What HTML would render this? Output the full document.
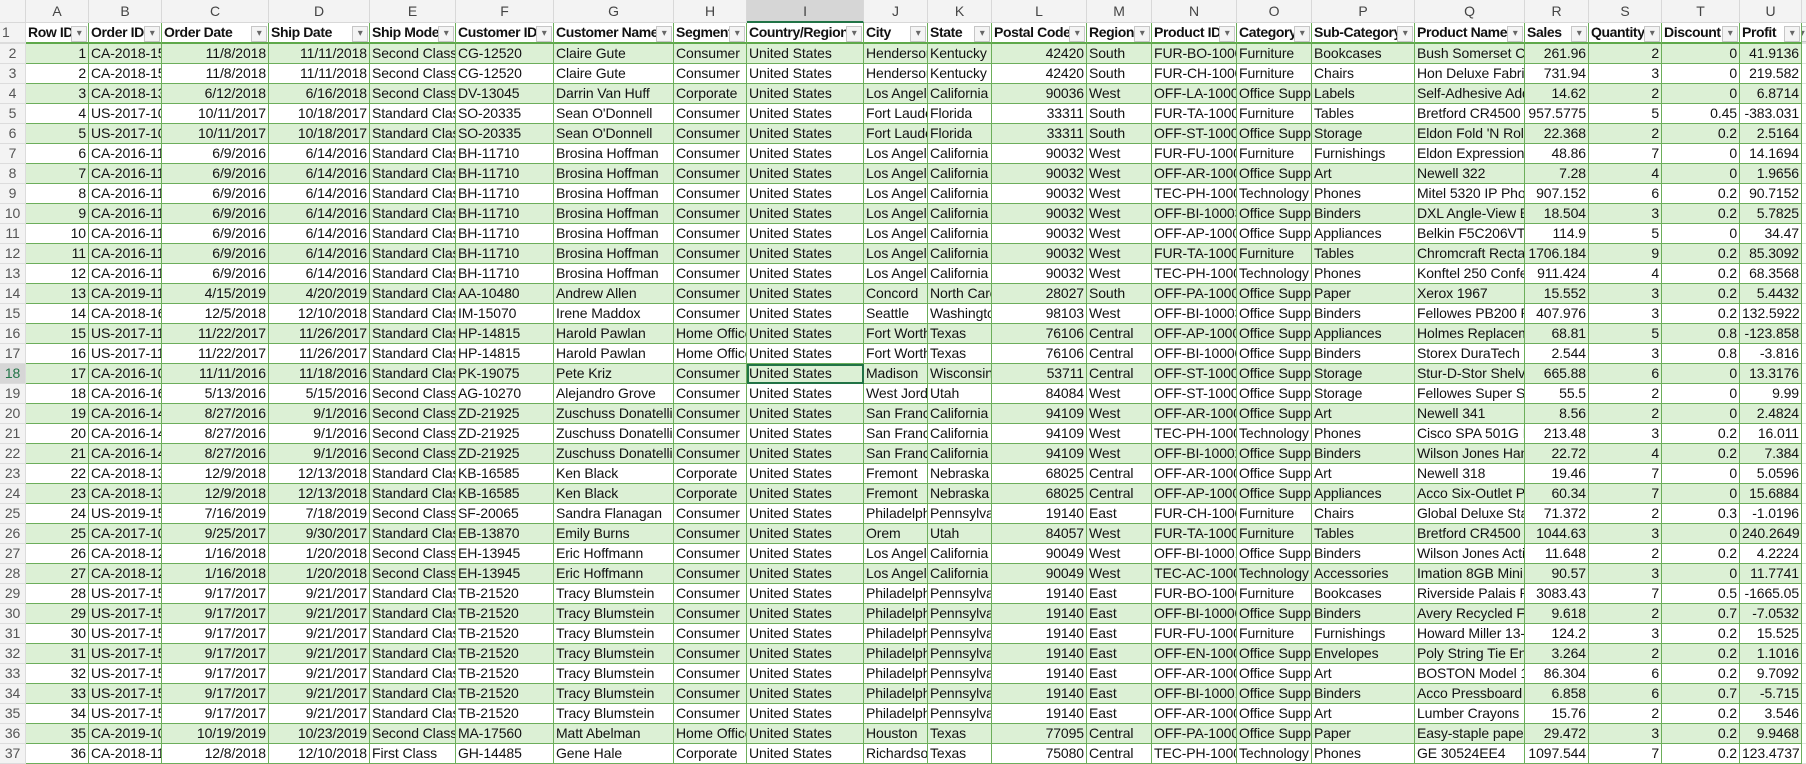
<!DOCTYPE html>
<html><head><meta charset="utf-8"><style>
body{margin:0;width:1806px;height:761px;overflow:hidden;background:#fff;font-family:"Liberation Sans Narrow","Liberation Sans",sans-serif;font-size:14px;letter-spacing:-0.1px;color:#111}
.r{display:flex;height:20px}
.r span{box-sizing:border-box;flex:none;height:20px;line-height:19px;padding:0 2px;overflow:hidden;white-space:nowrap;border-right:1px solid #6cae5a;border-bottom:1px solid #6cae5a;position:relative}
.r span:nth-child(1){width:26px;background:#f3f3f3;color:#555;text-align:center;border-color:#dcdcdc;font-size:14px}
.r span:nth-child(2){width:63px;text-align:right}
.r span:nth-child(3){width:73px}
.r span:nth-child(4){width:107px;text-align:right}
.r span:nth-child(5){width:101px;text-align:right}
.r span:nth-child(6){width:86px}
.r span:nth-child(7){width:98px}
.r span:nth-child(8){width:120px}
.r span:nth-child(9){width:73px}
.r span:nth-child(10){width:117px}
.r span:nth-child(11){width:64px}
.r span:nth-child(12){width:64px}
.r span:nth-child(13){width:95px;text-align:right}
.r span:nth-child(14){width:65px}
.r span:nth-child(15){width:85px}
.r span:nth-child(16){width:75px}
.r span:nth-child(17){width:103px}
.r span:nth-child(18){width:110px}
.r span:nth-child(19){width:64px;text-align:right}
.r span:nth-child(20){width:73px;text-align:right}
.r span:nth-child(21){width:78px;text-align:right}
.r span:nth-child(22){width:62px;text-align:right}
.r span:nth-child(23){width:10px;border-color:#e0e0e0;background:#fff}
.g span{background:#dcf0d5}
.h{height:23px}
.h span{height:23px;line-height:23px;background:#f3f3f3!important;color:#444;text-align:center!important;border-color:#d8d8d8!important;font-size:14px}
.h span.sel{background:#d6d6d6!important;border-bottom:2px solid #217346!important}
.t{height:21px}
.t span{height:21px;font-weight:bold;letter-spacing:-0.4px;text-align:left!important;border-bottom:2px solid #5ea84a}
.t span+span::after{content:"▾";position:absolute;right:1px;top:3px;width:14px;height:14px;line-height:13px;border:1px solid #c6c6c6;background:#f4f4f4;font-size:10px;color:#666;text-align:center;font-weight:normal}
.t span:nth-child(1){font-weight:normal}
.cur{outline:2px solid #217346;outline-offset:-2px}
</style></head><body>
<div class="r h"><span></span><span>A</span><span>B</span><span>C</span><span>D</span><span>E</span><span>F</span><span>G</span><span>H</span><span class="sel">I</span><span>J</span><span>K</span><span>L</span><span>M</span><span>N</span><span>O</span><span>P</span><span>Q</span><span>R</span><span>S</span><span>T</span><span>U</span><span></span></div>
<div class="r t"><span>1</span><span>Row ID</span><span>Order ID</span><span>Order Date</span><span>Ship Date</span><span>Ship Mode</span><span>Customer ID</span><span>Customer Name</span><span>Segment</span><span>Country/Region</span><span>City</span><span>State</span><span>Postal Code</span><span>Region</span><span>Product ID</span><span>Category</span><span>Sub-Category</span><span>Product Name</span><span>Sales</span><span>Quantity</span><span>Discount</span><span>Profit</span><span></span></div>
<div class="r g"><span>2</span><span>1</span><span>CA-2018-152156</span><span>11/8/2018</span><span>11/11/2018</span><span>Second Class</span><span>CG-12520</span><span>Claire Gute</span><span>Consumer</span><span>United States</span><span>Henderson</span><span>Kentucky</span><span>42420</span><span>South</span><span>FUR-BO-10001798</span><span>Furniture</span><span>Bookcases</span><span>Bush Somerset Collection</span><span>261.96</span><span>2</span><span>0</span><span>41.9136</span><span></span></div>
<div class="r"><span>3</span><span>2</span><span>CA-2018-152156</span><span>11/8/2018</span><span>11/11/2018</span><span>Second Class</span><span>CG-12520</span><span>Claire Gute</span><span>Consumer</span><span>United States</span><span>Henderson</span><span>Kentucky</span><span>42420</span><span>South</span><span>FUR-CH-10000454</span><span>Furniture</span><span>Chairs</span><span>Hon Deluxe Fabric Upholstered</span><span>731.94</span><span>3</span><span>0</span><span>219.582</span><span></span></div>
<div class="r g"><span>4</span><span>3</span><span>CA-2018-138688</span><span>6/12/2018</span><span>6/16/2018</span><span>Second Class</span><span>DV-13045</span><span>Darrin Van Huff</span><span>Corporate</span><span>United States</span><span>Los Angeles</span><span>California</span><span>90036</span><span>West</span><span>OFF-LA-10000240</span><span>Office Supplies</span><span>Labels</span><span>Self-Adhesive Address</span><span>14.62</span><span>2</span><span>0</span><span>6.8714</span><span></span></div>
<div class="r"><span>5</span><span>4</span><span>US-2017-108966</span><span>10/11/2017</span><span>10/18/2017</span><span>Standard Class</span><span>SO-20335</span><span>Sean O'Donnell</span><span>Consumer</span><span>United States</span><span>Fort Lauderdale</span><span>Florida</span><span>33311</span><span>South</span><span>FUR-TA-10000577</span><span>Furniture</span><span>Tables</span><span>Bretford CR4500 Series</span><span>957.5775</span><span>5</span><span>0.45</span><span>-383.031</span><span></span></div>
<div class="r g"><span>6</span><span>5</span><span>US-2017-108966</span><span>10/11/2017</span><span>10/18/2017</span><span>Standard Class</span><span>SO-20335</span><span>Sean O'Donnell</span><span>Consumer</span><span>United States</span><span>Fort Lauderdale</span><span>Florida</span><span>33311</span><span>South</span><span>OFF-ST-10000760</span><span>Office Supplies</span><span>Storage</span><span>Eldon Fold 'N Roll Cart</span><span>22.368</span><span>2</span><span>0.2</span><span>2.5164</span><span></span></div>
<div class="r"><span>7</span><span>6</span><span>CA-2016-115812</span><span>6/9/2016</span><span>6/14/2016</span><span>Standard Class</span><span>BH-11710</span><span>Brosina Hoffman</span><span>Consumer</span><span>United States</span><span>Los Angeles</span><span>California</span><span>90032</span><span>West</span><span>FUR-FU-10001487</span><span>Furniture</span><span>Furnishings</span><span>Eldon Expressions Wood</span><span>48.86</span><span>7</span><span>0</span><span>14.1694</span><span></span></div>
<div class="r g"><span>8</span><span>7</span><span>CA-2016-115812</span><span>6/9/2016</span><span>6/14/2016</span><span>Standard Class</span><span>BH-11710</span><span>Brosina Hoffman</span><span>Consumer</span><span>United States</span><span>Los Angeles</span><span>California</span><span>90032</span><span>West</span><span>OFF-AR-10002833</span><span>Office Supplies</span><span>Art</span><span>Newell 322</span><span>7.28</span><span>4</span><span>0</span><span>1.9656</span><span></span></div>
<div class="r"><span>9</span><span>8</span><span>CA-2016-115812</span><span>6/9/2016</span><span>6/14/2016</span><span>Standard Class</span><span>BH-11710</span><span>Brosina Hoffman</span><span>Consumer</span><span>United States</span><span>Los Angeles</span><span>California</span><span>90032</span><span>West</span><span>TEC-PH-10002275</span><span>Technology</span><span>Phones</span><span>Mitel 5320 IP Phone</span><span>907.152</span><span>6</span><span>0.2</span><span>90.7152</span><span></span></div>
<div class="r g"><span>10</span><span>9</span><span>CA-2016-115812</span><span>6/9/2016</span><span>6/14/2016</span><span>Standard Class</span><span>BH-11710</span><span>Brosina Hoffman</span><span>Consumer</span><span>United States</span><span>Los Angeles</span><span>California</span><span>90032</span><span>West</span><span>OFF-BI-10003910</span><span>Office Supplies</span><span>Binders</span><span>DXL Angle-View Binders</span><span>18.504</span><span>3</span><span>0.2</span><span>5.7825</span><span></span></div>
<div class="r"><span>11</span><span>10</span><span>CA-2016-115812</span><span>6/9/2016</span><span>6/14/2016</span><span>Standard Class</span><span>BH-11710</span><span>Brosina Hoffman</span><span>Consumer</span><span>United States</span><span>Los Angeles</span><span>California</span><span>90032</span><span>West</span><span>OFF-AP-10002892</span><span>Office Supplies</span><span>Appliances</span><span>Belkin F5C206VTEL 6</span><span>114.9</span><span>5</span><span>0</span><span>34.47</span><span></span></div>
<div class="r g"><span>12</span><span>11</span><span>CA-2016-115812</span><span>6/9/2016</span><span>6/14/2016</span><span>Standard Class</span><span>BH-11710</span><span>Brosina Hoffman</span><span>Consumer</span><span>United States</span><span>Los Angeles</span><span>California</span><span>90032</span><span>West</span><span>FUR-TA-10001539</span><span>Furniture</span><span>Tables</span><span>Chromcraft Rectangular</span><span>1706.184</span><span>9</span><span>0.2</span><span>85.3092</span><span></span></div>
<div class="r"><span>13</span><span>12</span><span>CA-2016-115812</span><span>6/9/2016</span><span>6/14/2016</span><span>Standard Class</span><span>BH-11710</span><span>Brosina Hoffman</span><span>Consumer</span><span>United States</span><span>Los Angeles</span><span>California</span><span>90032</span><span>West</span><span>TEC-PH-10002033</span><span>Technology</span><span>Phones</span><span>Konftel 250 Conference</span><span>911.424</span><span>4</span><span>0.2</span><span>68.3568</span><span></span></div>
<div class="r g"><span>14</span><span>13</span><span>CA-2019-114412</span><span>4/15/2019</span><span>4/20/2019</span><span>Standard Class</span><span>AA-10480</span><span>Andrew Allen</span><span>Consumer</span><span>United States</span><span>Concord</span><span>North Carolina</span><span>28027</span><span>South</span><span>OFF-PA-10002365</span><span>Office Supplies</span><span>Paper</span><span>Xerox 1967</span><span>15.552</span><span>3</span><span>0.2</span><span>5.4432</span><span></span></div>
<div class="r"><span>15</span><span>14</span><span>CA-2018-161389</span><span>12/5/2018</span><span>12/10/2018</span><span>Standard Class</span><span>IM-15070</span><span>Irene Maddox</span><span>Consumer</span><span>United States</span><span>Seattle</span><span>Washington</span><span>98103</span><span>West</span><span>OFF-BI-10003656</span><span>Office Supplies</span><span>Binders</span><span>Fellowes PB200 Plastic</span><span>407.976</span><span>3</span><span>0.2</span><span>132.5922</span><span></span></div>
<div class="r g"><span>16</span><span>15</span><span>US-2017-118983</span><span>11/22/2017</span><span>11/26/2017</span><span>Standard Class</span><span>HP-14815</span><span>Harold Pawlan</span><span>Home Office</span><span>United States</span><span>Fort Worth</span><span>Texas</span><span>76106</span><span>Central</span><span>OFF-AP-10002311</span><span>Office Supplies</span><span>Appliances</span><span>Holmes Replacement Filter</span><span>68.81</span><span>5</span><span>0.8</span><span>-123.858</span><span></span></div>
<div class="r"><span>17</span><span>16</span><span>US-2017-118983</span><span>11/22/2017</span><span>11/26/2017</span><span>Standard Class</span><span>HP-14815</span><span>Harold Pawlan</span><span>Home Office</span><span>United States</span><span>Fort Worth</span><span>Texas</span><span>76106</span><span>Central</span><span>OFF-BI-10000756</span><span>Office Supplies</span><span>Binders</span><span>Storex DuraTech Recycled</span><span>2.544</span><span>3</span><span>0.8</span><span>-3.816</span><span></span></div>
<div class="r g"><span style="background:#d6d6d6;color:#217346">18</span><span>17</span><span>CA-2016-105893</span><span>11/11/2016</span><span>11/18/2016</span><span>Standard Class</span><span>PK-19075</span><span>Pete Kriz</span><span>Consumer</span><span class="cur">United States</span><span>Madison</span><span>Wisconsin</span><span>53711</span><span>Central</span><span>OFF-ST-10004186</span><span>Office Supplies</span><span>Storage</span><span>Stur-D-Stor Shelving</span><span>665.88</span><span>6</span><span>0</span><span>13.3176</span><span></span></div>
<div class="r"><span>19</span><span>18</span><span>CA-2016-167164</span><span>5/13/2016</span><span>5/15/2016</span><span>Second Class</span><span>AG-10270</span><span>Alejandro Grove</span><span>Consumer</span><span>United States</span><span>West Jordan</span><span>Utah</span><span>84084</span><span>West</span><span>OFF-ST-10000107</span><span>Office Supplies</span><span>Storage</span><span>Fellowes Super Stor/Drawer</span><span>55.5</span><span>2</span><span>0</span><span>9.99</span><span></span></div>
<div class="r g"><span>20</span><span>19</span><span>CA-2016-143336</span><span>8/27/2016</span><span>9/1/2016</span><span>Second Class</span><span>ZD-21925</span><span>Zuschuss Donatelli</span><span>Consumer</span><span>United States</span><span>San Francisco</span><span>California</span><span>94109</span><span>West</span><span>OFF-AR-10003056</span><span>Office Supplies</span><span>Art</span><span>Newell 341</span><span>8.56</span><span>2</span><span>0</span><span>2.4824</span><span></span></div>
<div class="r"><span>21</span><span>20</span><span>CA-2016-143336</span><span>8/27/2016</span><span>9/1/2016</span><span>Second Class</span><span>ZD-21925</span><span>Zuschuss Donatelli</span><span>Consumer</span><span>United States</span><span>San Francisco</span><span>California</span><span>94109</span><span>West</span><span>TEC-PH-10001949</span><span>Technology</span><span>Phones</span><span>Cisco SPA 501G IP Phone</span><span>213.48</span><span>3</span><span>0.2</span><span>16.011</span><span></span></div>
<div class="r g"><span>22</span><span>21</span><span>CA-2016-143336</span><span>8/27/2016</span><span>9/1/2016</span><span>Second Class</span><span>ZD-21925</span><span>Zuschuss Donatelli</span><span>Consumer</span><span>United States</span><span>San Francisco</span><span>California</span><span>94109</span><span>West</span><span>OFF-BI-10002215</span><span>Office Supplies</span><span>Binders</span><span>Wilson Jones Hanging</span><span>22.72</span><span>4</span><span>0.2</span><span>7.384</span><span></span></div>
<div class="r"><span>23</span><span>22</span><span>CA-2018-137330</span><span>12/9/2018</span><span>12/13/2018</span><span>Standard Class</span><span>KB-16585</span><span>Ken Black</span><span>Corporate</span><span>United States</span><span>Fremont</span><span>Nebraska</span><span>68025</span><span>Central</span><span>OFF-AR-10000246</span><span>Office Supplies</span><span>Art</span><span>Newell 318</span><span>19.46</span><span>7</span><span>0</span><span>5.0596</span><span></span></div>
<div class="r g"><span>24</span><span>23</span><span>CA-2018-137330</span><span>12/9/2018</span><span>12/13/2018</span><span>Standard Class</span><span>KB-16585</span><span>Ken Black</span><span>Corporate</span><span>United States</span><span>Fremont</span><span>Nebraska</span><span>68025</span><span>Central</span><span>OFF-AP-10001492</span><span>Office Supplies</span><span>Appliances</span><span>Acco Six-Outlet Power</span><span>60.34</span><span>7</span><span>0</span><span>15.6884</span><span></span></div>
<div class="r"><span>25</span><span>24</span><span>US-2019-156909</span><span>7/16/2019</span><span>7/18/2019</span><span>Second Class</span><span>SF-20065</span><span>Sandra Flanagan</span><span>Consumer</span><span>United States</span><span>Philadelphia</span><span>Pennsylvania</span><span>19140</span><span>East</span><span>FUR-CH-10002774</span><span>Furniture</span><span>Chairs</span><span>Global Deluxe Stacking</span><span>71.372</span><span>2</span><span>0.3</span><span>-1.0196</span><span></span></div>
<div class="r g"><span>26</span><span>25</span><span>CA-2017-106320</span><span>9/25/2017</span><span>9/30/2017</span><span>Standard Class</span><span>EB-13870</span><span>Emily Burns</span><span>Consumer</span><span>United States</span><span>Orem</span><span>Utah</span><span>84057</span><span>West</span><span>FUR-TA-10000577</span><span>Furniture</span><span>Tables</span><span>Bretford CR4500 Series</span><span>1044.63</span><span>3</span><span>0</span><span>240.2649</span><span></span></div>
<div class="r"><span>27</span><span>26</span><span>CA-2018-121755</span><span>1/16/2018</span><span>1/20/2018</span><span>Second Class</span><span>EH-13945</span><span>Eric Hoffmann</span><span>Consumer</span><span>United States</span><span>Los Angeles</span><span>California</span><span>90049</span><span>West</span><span>OFF-BI-10001634</span><span>Office Supplies</span><span>Binders</span><span>Wilson Jones Active Use</span><span>11.648</span><span>2</span><span>0.2</span><span>4.2224</span><span></span></div>
<div class="r g"><span>28</span><span>27</span><span>CA-2018-121755</span><span>1/16/2018</span><span>1/20/2018</span><span>Second Class</span><span>EH-13945</span><span>Eric Hoffmann</span><span>Consumer</span><span>United States</span><span>Los Angeles</span><span>California</span><span>90049</span><span>West</span><span>TEC-AC-10003027</span><span>Technology</span><span>Accessories</span><span>Imation 8GB Mini</span><span>90.57</span><span>3</span><span>0</span><span>11.7741</span><span></span></div>
<div class="r"><span>29</span><span>28</span><span>US-2017-150630</span><span>9/17/2017</span><span>9/21/2017</span><span>Standard Class</span><span>TB-21520</span><span>Tracy Blumstein</span><span>Consumer</span><span>United States</span><span>Philadelphia</span><span>Pennsylvania</span><span>19140</span><span>East</span><span>FUR-BO-10004834</span><span>Furniture</span><span>Bookcases</span><span>Riverside Palais Royal</span><span>3083.43</span><span>7</span><span>0.5</span><span>-1665.05</span><span></span></div>
<div class="r g"><span>30</span><span>29</span><span>US-2017-150630</span><span>9/17/2017</span><span>9/21/2017</span><span>Standard Class</span><span>TB-21520</span><span>Tracy Blumstein</span><span>Consumer</span><span>United States</span><span>Philadelphia</span><span>Pennsylvania</span><span>19140</span><span>East</span><span>OFF-BI-10000474</span><span>Office Supplies</span><span>Binders</span><span>Avery Recycled Flexi-View</span><span>9.618</span><span>2</span><span>0.7</span><span>-7.0532</span><span></span></div>
<div class="r"><span>31</span><span>30</span><span>US-2017-150630</span><span>9/17/2017</span><span>9/21/2017</span><span>Standard Class</span><span>TB-21520</span><span>Tracy Blumstein</span><span>Consumer</span><span>United States</span><span>Philadelphia</span><span>Pennsylvania</span><span>19140</span><span>East</span><span>FUR-FU-10004848</span><span>Furniture</span><span>Furnishings</span><span>Howard Miller 13-3/4"</span><span>124.2</span><span>3</span><span>0.2</span><span>15.525</span><span></span></div>
<div class="r g"><span>32</span><span>31</span><span>US-2017-150630</span><span>9/17/2017</span><span>9/21/2017</span><span>Standard Class</span><span>TB-21520</span><span>Tracy Blumstein</span><span>Consumer</span><span>United States</span><span>Philadelphia</span><span>Pennsylvania</span><span>19140</span><span>East</span><span>OFF-EN-10001509</span><span>Office Supplies</span><span>Envelopes</span><span>Poly String Tie Envelopes</span><span>3.264</span><span>2</span><span>0.2</span><span>1.1016</span><span></span></div>
<div class="r"><span>33</span><span>32</span><span>US-2017-150630</span><span>9/17/2017</span><span>9/21/2017</span><span>Standard Class</span><span>TB-21520</span><span>Tracy Blumstein</span><span>Consumer</span><span>United States</span><span>Philadelphia</span><span>Pennsylvania</span><span>19140</span><span>East</span><span>OFF-AR-10004042</span><span>Office Supplies</span><span>Art</span><span>BOSTON Model 1800</span><span>86.304</span><span>6</span><span>0.2</span><span>9.7092</span><span></span></div>
<div class="r g"><span>34</span><span>33</span><span>US-2017-150630</span><span>9/17/2017</span><span>9/21/2017</span><span>Standard Class</span><span>TB-21520</span><span>Tracy Blumstein</span><span>Consumer</span><span>United States</span><span>Philadelphia</span><span>Pennsylvania</span><span>19140</span><span>East</span><span>OFF-BI-10001525</span><span>Office Supplies</span><span>Binders</span><span>Acco Pressboard Covers</span><span>6.858</span><span>6</span><span>0.7</span><span>-5.715</span><span></span></div>
<div class="r"><span>35</span><span>34</span><span>US-2017-150630</span><span>9/17/2017</span><span>9/21/2017</span><span>Standard Class</span><span>TB-21520</span><span>Tracy Blumstein</span><span>Consumer</span><span>United States</span><span>Philadelphia</span><span>Pennsylvania</span><span>19140</span><span>East</span><span>OFF-AR-10001683</span><span>Office Supplies</span><span>Art</span><span>Lumber Crayons</span><span>15.76</span><span>2</span><span>0.2</span><span>3.546</span><span></span></div>
<div class="r g"><span>36</span><span>35</span><span>CA-2019-107727</span><span>10/19/2019</span><span>10/23/2019</span><span>Second Class</span><span>MA-17560</span><span>Matt Abelman</span><span>Home Office</span><span>United States</span><span>Houston</span><span>Texas</span><span>77095</span><span>Central</span><span>OFF-PA-10000249</span><span>Office Supplies</span><span>Paper</span><span>Easy-staple paper</span><span>29.472</span><span>3</span><span>0.2</span><span>9.9468</span><span></span></div>
<div class="r"><span>37</span><span>36</span><span>CA-2018-117590</span><span>12/8/2018</span><span>12/10/2018</span><span>First Class</span><span>GH-14485</span><span>Gene Hale</span><span>Corporate</span><span>United States</span><span>Richardson</span><span>Texas</span><span>75080</span><span>Central</span><span>TEC-PH-10004977</span><span>Technology</span><span>Phones</span><span>GE 30524EE4</span><span>1097.544</span><span>7</span><span>0.2</span><span>123.4737</span><span></span></div>
</body></html>
